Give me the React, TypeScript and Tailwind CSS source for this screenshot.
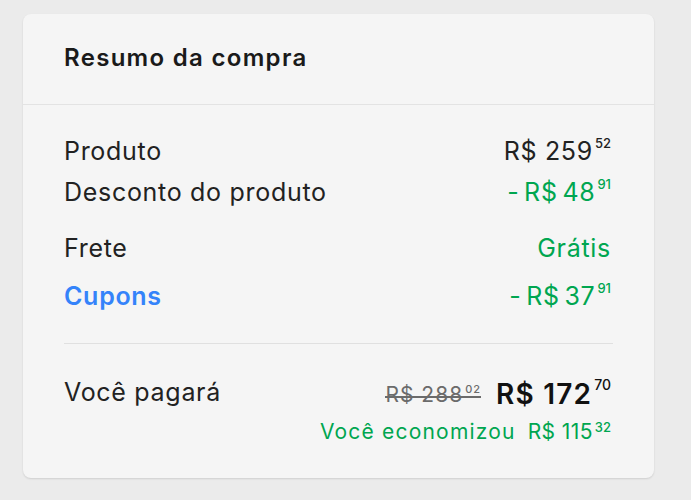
import React from "react";

// ─── Resumo da compra ─────────────────────────────────────────────────────────

const font = { fontFamily: "Inter, 'Noto Sans', sans-serif" };

function Price({ int, cents, className = "", centsClass = "" }: { int: string; cents: string; className?: string; centsClass?: string }) {
  return (
    <span className={`inline-flex items-start ${className}`}>
      <span>{int}</span>
      <span className={`ml-[2px] text-[13px] leading-none tracking-normal font-medium ${centsClass}`}>{cents}</span>
    </span>
  );
}

export default function App() {
  return (
    <div className="min-h-[500px] bg-[#ebebeb] pl-[23px] pt-[14px]" style={font}>
      <div className="w-[631px] rounded-[8px] bg-[#f5f5f5] shadow-[0_1px_2px_rgba(0,0,0,0.12)]">
        <div className="h-[91px] flex items-center px-[41px] border-b border-[#e3e3e3]">
          <h2 className="text-[24px] font-semibold text-[#1a1a1a] tracking-[1.3px] mt-[-2px]">Resumo da compra</h2>
        </div>

        <div className="pl-[41px] pr-[43px] pt-[32px] text-[25px] text-[#222] tracking-[0.7px]">
          <div className="flex justify-between items-center h-[30px]">
            <span>Produto</span>
            <Price int="R$ 259" cents="52" centsClass="mt-[4px]" />
          </div>
          <div className="flex justify-between items-center h-[30px] mt-[11px]">
            <span>Desconto do produto</span>
            <Price int="- R$ 48" cents="91" className="text-[#00a650] [word-spacing:-3px]" centsClass="mt-[4px]" />
          </div>
          <div className="flex justify-between items-center h-[30px] mt-[26px]">
            <span>Frete</span>
            <span className="text-[#00a650]">Grátis</span>
          </div>
          <div className="flex justify-between items-center h-[30px] mt-[18px]">
            <span className="text-[#3483fa] font-semibold">Cupons</span>
            <Price int="- R$ 37" cents="91" className="text-[#00a650] [word-spacing:-3px]" centsClass="mt-[4px]" />
          </div>

          <div className="h-px bg-[#e0e0e0] mt-[31px] mr-[-2px]" />

          <div className="flex justify-between items-start pt-[29px] pb-[30px]">
            <span className="mt-[1px]">Você pagará</span>
            <div className="flex flex-col items-end">
              <div className="flex items-start gap-[15px]">
                <span className="relative inline-flex items-start text-[21px] text-[#6b6b6b] mt-[6px] tracking-[1px]">
                  <span>R$ 288</span>
                  <span className="ml-[2px] text-[11px] leading-none mt-[5px] font-medium">02</span>
                  <span className="absolute left-0 right-0 top-[55%] h-[1.5px] bg-[#6b6b6b]" />
                </span>
                <Price int="R$ 172" cents="70" className="text-[28px] font-semibold text-[#111] tracking-[1.2px]" centsClass="text-[14px] mt-[5px]" />
              </div>
              <div className="flex items-start text-[21px] text-[#00a650] mt-[1px] tracking-[1.2px]">
                <span>Você economizou</span>
                <Price int="R$ 115" cents="32" className="ml-[12px] tracking-[0.4px]" centsClass="text-[11px] mt-[5px]" />
              </div>
            </div>
          </div>
        </div>
      </div>
    </div>
  );
}
